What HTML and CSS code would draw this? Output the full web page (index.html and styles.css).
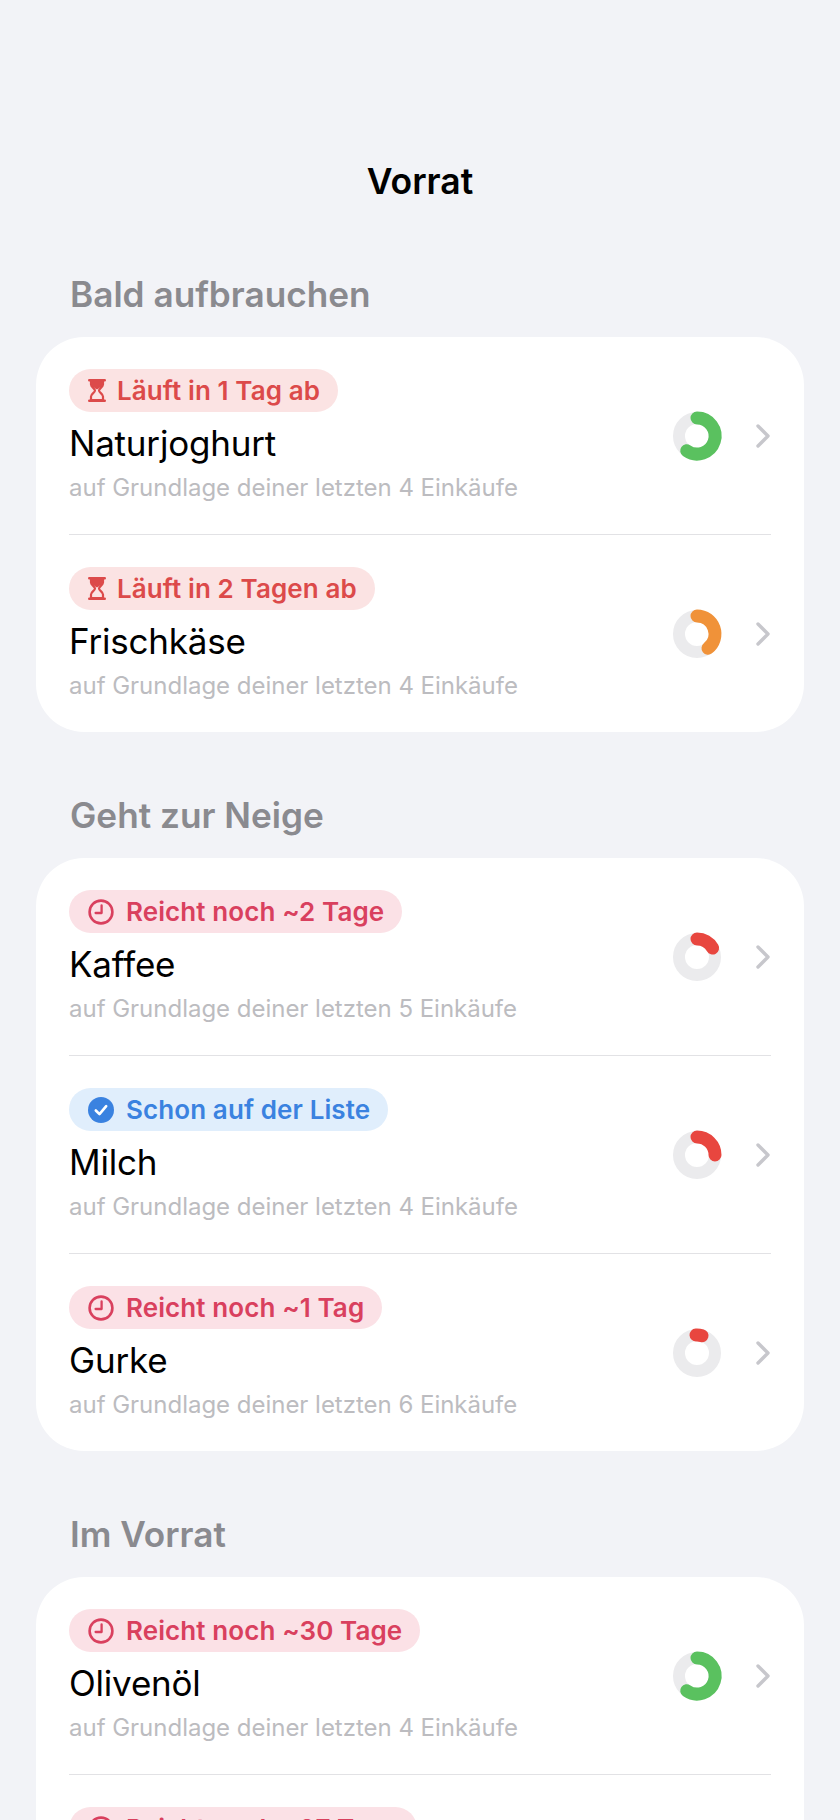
FILE: index.html
```html
<!DOCTYPE html>
<html lang="de">
<head>
	<meta charset="UTF-8">
	<title>Vorrat</title>
	<link rel="stylesheet" href="styles.css">
</head>
<body>
	<svg class="defs" width="0" height="0">
		<symbol id="i-clock" viewBox="0 0 26 26">
			<circle cx="13" cy="13" r="11.4" fill="none" stroke="currentColor" stroke-width="2.6"/>
			<path d="M13.6 6.5V14H7.6" fill="none" stroke="currentColor" stroke-width="2.3" stroke-linecap="round" stroke-linejoin="round"/>
		</symbol>
		<symbol id="i-hourglass" viewBox="0 0 18 23">
			<path d="M1.2 1.2H16.8M1.2 21.8H16.8" fill="none" stroke="currentColor" stroke-width="2.4" stroke-linecap="round"/>
			<path d="M3 2H15V5.5C15 8 11 9.500 11 11.500S15 15 15 17.500V21H3V17.500C3 15 7 13.500 7 11.500S3 8 3 5.500Z" fill="none" stroke="currentColor" stroke-width="2.2"/>
			<path d="M3.500 2H14.500V6C14.500 7.500 11 9 9 10.500C7 9 3.500 7.500 3.500 6Z" fill="currentColor"/>
		</symbol>
		<symbol id="i-check" viewBox="0 0 26 26">
			<circle cx="13" cy="13" r="13" fill="currentColor"/>
			<path d="M7.800 13.500L11.500 17.200L18.200 9.200" fill="none" stroke="#fff" stroke-width="2.600" stroke-linecap="round" stroke-linejoin="round"/>
		</symbol>
		<symbol id="i-chevron" viewBox="0 0 14 24">
			<path d="M2 2L12 12L2 22" fill="none" stroke="currentColor" stroke-width="3.400" stroke-linecap="round" stroke-linejoin="round"/>
		</symbol>
	</svg>

	<div class="page">
		<h1 class="title">Vorrat</h1>

		<section class="group">
			<h2 class="group-title">Bald aufbrauchen</h2>
			<div class="card">
				<div class="row">
					<div class="info">
						<span class="pill pill-expire"><svg class="icon-hourglass"><use href="#i-hourglass"/></svg>Läuft in 1 Tag ab</span>
						<div class="name">Naturjoghurt</div>
						<div class="sub">auf Grundlage deiner letzten 4 Einkäufe</div>
					</div>
					<svg class="ring" viewBox="0 0 48 48"><circle class="ring-bg" cx="24" cy="24" r="18"/><path class="ring-val green" d="M24 6A18 18 0 1 1 13.700 38.700"/></svg>
					<svg class="chevron"><use href="#i-chevron"/></svg>
				</div>
				<div class="row">
					<div class="info">
						<span class="pill pill-expire"><svg class="icon-hourglass"><use href="#i-hourglass"/></svg>Läuft in 2 Tagen ab</span>
						<div class="name">Frischkäse</div>
						<div class="sub">auf Grundlage deiner letzten 4 Einkäufe</div>
					</div>
					<svg class="ring" viewBox="0 0 48 48"><circle class="ring-bg" cx="24" cy="24" r="18"/><path class="ring-val orange" d="M24 6A18 18 0 0 1 35 38.200"/></svg>
					<svg class="chevron"><use href="#i-chevron"/></svg>
				</div>
			</div>
		</section>

		<section class="group">
			<h2 class="group-title">Geht zur Neige</h2>
			<div class="card">
				<div class="row">
					<div class="info">
						<span class="pill pill-low"><svg class="icon"><use href="#i-clock"/></svg>Reicht noch ~2 Tage</span>
						<div class="name">Kaffee</div>
						<div class="sub">auf Grundlage deiner letzten 5 Einkäufe</div>
					</div>
					<svg class="ring" viewBox="0 0 48 48"><circle class="ring-bg" cx="24" cy="24" r="18"/><path class="ring-val red" d="M24 6A18 18 0 0 1 39.600 15"/></svg>
					<svg class="chevron"><use href="#i-chevron"/></svg>
				</div>
				<div class="row">
					<div class="info">
						<span class="pill pill-listed"><svg class="icon"><use href="#i-check"/></svg>Schon auf der Liste</span>
						<div class="name">Milch</div>
						<div class="sub">auf Grundlage deiner letzten 4 Einkäufe</div>
					</div>
					<svg class="ring" viewBox="0 0 48 48"><circle class="ring-bg" cx="24" cy="24" r="18"/><path class="ring-val red" d="M24 6A18 18 0 0 1 42 24"/></svg>
					<svg class="chevron"><use href="#i-chevron"/></svg>
				</div>
				<div class="row">
					<div class="info">
						<span class="pill pill-low"><svg class="icon"><use href="#i-clock"/></svg>Reicht noch ~1 Tag</span>
						<div class="name">Gurke</div>
						<div class="sub">auf Grundlage deiner letzten 6 Einkäufe</div>
					</div>
					<svg class="ring" viewBox="0 0 48 48"><circle class="ring-bg" cx="24" cy="24" r="18"/><path class="ring-val red" d="M23 6A18 18 0 0 1 29 6.700"/></svg>
					<svg class="chevron"><use href="#i-chevron"/></svg>
				</div>
			</div>
		</section>

		<section class="group">
			<h2 class="group-title">Im Vorrat</h2>
			<div class="card">
				<div class="row">
					<div class="info">
						<span class="pill pill-low"><svg class="icon"><use href="#i-clock"/></svg>Reicht noch ~30 Tage</span>
						<div class="name">Olivenöl</div>
						<div class="sub">auf Grundlage deiner letzten 4 Einkäufe</div>
					</div>
					<svg class="ring" viewBox="0 0 48 48"><circle class="ring-bg" cx="24" cy="24" r="18"/><path class="ring-val green" d="M24 6A18 18 0 1 1 13.700 38.700"/></svg>
					<svg class="chevron"><use href="#i-chevron"/></svg>
				</div>
				<div class="row">
					<div class="info">
						<span class="pill pill-low"><svg class="icon"><use href="#i-clock"/></svg>Reicht noch ~27 Tage</span>
					</div>
				</div>
			</div>
		</section>
	</div>
</body>
</html>
```

FILE: styles.css
```css
* {
	margin: 0;
	box-sizing: border-box;
}

body {
	background-color: #f2f3f7;
	font-family: "Inter", "Liberation Sans", sans-serif;
	color: #000000;
}

.defs {
	position: absolute;
}

.page {
	height: 1820px;
	overflow: hidden;
	padding: 160px 36px 0;
}

.title {
	font-size: 35.5px;
	line-height: 44px;
	font-weight: 600;
	text-align: center;
}

.group {
	margin-bottom: 61px;
}

.title + .group {
	margin-top: 68px;
}

.group-title {
	font-size: 35.2px;
	line-height: 44px;
	font-weight: 600;
	color: #8a8a8f;
	padding-left: 34px;
	margin-bottom: 21px;
}

.card {
	background-color: #ffffff;
	border-radius: 48px;
	padding: 0 33px;
}

.row {
	display: flex;
	align-items: center;
	padding: 32px 0 31px;
	border-bottom: 1px solid #e2e2e5;
}

.row:last-child {
	border-bottom: 0;
}

.info {
	flex: 1;
}

.pill {
	display: inline-flex;
	align-items: center;
	height: 43px;
	padding: 0 18px 0 19px;
	border-radius: 22px;
	font-size: 26px;
	font-weight: 570;
	letter-spacing: 0.1px;
	white-space: nowrap;
}

.pill-expire {
	background-color: #fbe3e3;
	color: #dc4a4a;
}

.pill-low {
	background-color: #fbe1e6;
	color: #d9405e;
}

.pill-listed {
	background-color: #e0eefc;
	color: #3a82e0;
}

.icon {
	width: 26px;
	height: 26px;
	margin-right: 12px;
}

.icon-hourglass {
	width: 18px;
	height: 23px;
	margin-right: 11px;
}

.name {
	font-size: 35px;
	letter-spacing: -0.2px;
	line-height: 44px;
	margin-top: 9px;
}

.sub {
	font-size: 24px;
	letter-spacing: -0.02px;
	line-height: 30px;
	margin-top: 8px;
	color: #bcbcc0;
}

.ring {
	width: 48px;
	height: 48px;
	margin-right: 35px;
	overflow: visible;
}

.ring-bg {
	fill: none;
	stroke: #ebebed;
	stroke-width: 12;
}

.ring-val {
	fill: none;
	stroke-width: 13;
	stroke-linecap: round;
}

.green {
	stroke: #5ac15f;
}

.orange {
	stroke: #f09239;
}

.red {
	stroke: #e8463f;
}

.chevron {
	width: 14px;
	height: 24px;
	margin-right: 1px;
	color: #c7c7cc;
}
```
